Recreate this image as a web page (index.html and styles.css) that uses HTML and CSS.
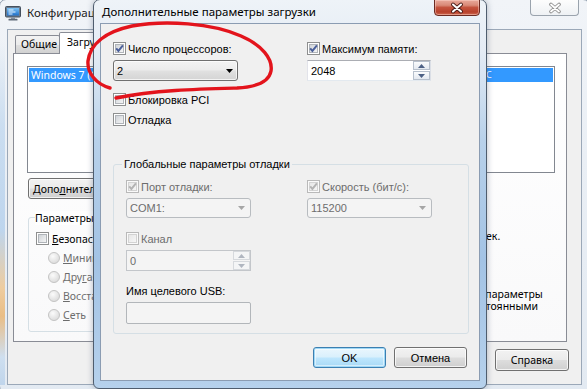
FILE: index.html
```html
<!DOCTYPE html>
<html lang="ru">
<head>
<meta charset="utf-8">
<title>Дополнительные параметры загрузки</title>
<link rel="stylesheet" href="styles.css">
</head>
<body>
<svg class="defs" width="0" height="0" aria-hidden="true">
  <defs>
    <linearGradient id="cbin" x1="0" y1="0" x2="1" y2="1">
      <stop offset="0" stop-color="#cdd1d6"/>
      <stop offset="1" stop-color="#f7f7f7"/>
    </linearGradient>
    <linearGradient id="cbdis" x1="0" y1="0" x2="1" y2="1">
      <stop offset="0" stop-color="#e6e6e6"/>
      <stop offset="1" stop-color="#f7f7f7"/>
    </linearGradient>
    <radialGradient id="rdis" cx="0.4" cy="0.35" r="0.7">
      <stop offset="0" stop-color="#fbfbfb"/>
      <stop offset="1" stop-color="#d9d9d9"/>
    </radialGradient>
    <linearGradient id="scr" x1="0" y1="0" x2="0" y2="1">
      <stop offset="0" stop-color="#7dc3f5"/>
      <stop offset="1" stop-color="#1f6fc9"/>
    </linearGradient>
  </defs>
</svg>

<div class="screen">

  <!-- background window: Конфигурация системы -->
  <div class="bgwin">
    <div class="bg-title">
      <svg class="app-ico" viewBox="0 0 16 16" width="16" height="16">
        <rect x="0.5" y="1.5" width="15" height="10.5" rx="1" fill="#6b7c90" stroke="#44505e"/>
        <rect x="2" y="3" width="12" height="7.5" fill="url(#scr)"/>
        <path d="M3.5 5h5M3.5 7h7M3.5 9h4" stroke="#e8f4ff" stroke-width="1"/>
        <rect x="6" y="12" width="4" height="2" fill="#8d98a6"/>
        <rect x="3.5" y="13.8" width="9" height="1.7" rx="0.5" fill="#5f6a78"/>
      </svg>
      <span class="bg-title-text">Конфигурация системы</span>
      <div class="close-inactive">
        <svg viewBox="0 0 14 12" width="14" height="12">
          <path d="M3 2.5 11 9.5M11 2.5 3 9.5" stroke="#8d8d8d" stroke-width="3.6" stroke-linecap="round"/>
          <path d="M3 2.5 11 9.5M11 2.5 3 9.5" stroke="#ffffff" stroke-width="1.8" stroke-linecap="round"/>
        </svg>
      </div>
    </div>
    <div class="bg-client">
      <div class="tabs">
        <div class="tab">Общие</div>
        <div class="tab sel">Загрузка</div>
      </div>
      <div class="tabpage">
        <div class="listbox">
          <div class="li sel"><span class="li-text">Windows 7 (C:\Windows)</span><span class="li-tail">С</span></div>
        </div>
        <div class="bg-btnrow">
          <div class="btn bg-btn wide">Допо<u>л</u>нительные параметры...</div>
        </div>
        <div class="bg-lower">
          <div class="gbox bg-gbox">
            <span class="gb-label bg-gb-label">Параметры загрузки</span>
            <div class="cb bg-cb"><svg class="cbx" viewBox="0 0 13 13" width="13" height="13"><rect x="0.5" y="0.5" width="12" height="12" fill="#fff" stroke="#8e8f8f"/><rect x="2.5" y="2.5" width="8" height="8" fill="url(#cbin)" stroke="#b0b4b9"/></svg><span><u>Б</u>езопасный режим</span></div>
            <div class="radios">
              <div class="rd"><svg viewBox="0 0 12 12" width="12" height="12"><circle cx="6" cy="6" r="5.5" fill="url(#rdis)" stroke="#c4c4c4"/></svg><span><u>М</u>инимальная</span></div>
              <div class="rd"><svg viewBox="0 0 12 12" width="12" height="12"><circle cx="6" cy="6" r="5.5" fill="url(#rdis)" stroke="#c4c4c4"/></svg><span>Дру<u>г</u>ая оболочка</span></div>
              <div class="rd"><svg viewBox="0 0 12 12" width="12" height="12"><circle cx="6" cy="6" r="5.5" fill="url(#rdis)" stroke="#c4c4c4"/></svg><span><u>В</u>осстановление</span></div>
              <div class="rd"><svg viewBox="0 0 12 12" width="12" height="12"><circle cx="6" cy="6" r="5.5" fill="url(#rdis)" stroke="#c4c4c4"/></svg><span><u>С</u>еть</span></div>
            </div>
          </div>
          <div class="rcol">
            <div class="rc-label"></div>
            <div class="rc-row"><span class="tbox"></span><span>сек.</span></div>
            <div class="cb bg-cb keep"><svg class="cbx" viewBox="0 0 13 13" width="13" height="13"><rect x="0.5" y="0.5" width="12" height="12" fill="#fff" stroke="#8e8f8f"/><rect x="2.5" y="2.5" width="8" height="8" fill="url(#cbin)" stroke="#b0b4b9"/></svg><span class="keep-text">Сделать эти параметры загрузки постоянными</span></div>
          </div>
        </div>
      </div>
      <div class="bg-bottom">
        <div class="btn bg-btn bb">Справка</div>
      </div>
    </div>
  </div>

  <!-- foreground dialog -->
  <div class="dlg">
    <div class="dlg-title">
      <span class="dlg-title-text">Дополнительные параметры загрузки</span>
      <div class="close-red">
        <svg viewBox="0 0 14 12" width="14" height="12">
          <path d="M3 2.5 11 9.5M11 2.5 3 9.5" stroke="#4a1c18" stroke-width="3.8" stroke-linecap="round"/>
          <path d="M3 2.5 11 9.5M11 2.5 3 9.5" stroke="#ffffff" stroke-width="2" stroke-linecap="round"/>
        </svg>
      </div>
    </div>
    <div class="dlg-client">
      <div class="row2">
        <div class="colA">
          <div class="cb"><svg class="cbx" viewBox="0 0 13 13" width="13" height="13"><rect x="0.5" y="0.5" width="12" height="12" fill="#fff" stroke="#8e8f8f"/><rect x="2.5" y="2.5" width="8" height="8" fill="url(#cbin)" stroke="#b0b4b9"/><path d="M3.2 6.3 5.4 8.9 9.9 3.3" fill="none" stroke="#4a5f9a" stroke-width="1.9"/></svg><span>Число процессоров:</span></div>
          <div class="combo"><span>2</span><svg viewBox="0 0 7 4" width="7" height="4"><path d="M0 0h7L3.5 4z" fill="#000"/></svg></div>
        </div>
        <div class="colB">
          <div class="cb"><svg class="cbx" viewBox="0 0 13 13" width="13" height="13"><rect x="0.5" y="0.5" width="12" height="12" fill="#fff" stroke="#8e8f8f"/><rect x="2.5" y="2.5" width="8" height="8" fill="url(#cbin)" stroke="#b0b4b9"/><path d="M3.2 6.3 5.4 8.9 9.9 3.3" fill="none" stroke="#4a5f9a" stroke-width="1.9"/></svg><span>Максимум памяти:</span></div>
          <div class="spin">
            <span class="spin-val">2048</span>
            <div class="spin-btns">
              <div class="sb"><svg viewBox="0 0 7 4" width="7" height="4"><path d="M0 4h7L3.5 0z" fill="#4d6185"/></svg></div>
              <div class="sb"><svg viewBox="0 0 7 4" width="7" height="4"><path d="M0 0h7L3.5 4z" fill="#4d6185"/></svg></div>
            </div>
          </div>
        </div>
      </div>
      <div class="cb pci"><svg class="cbx" viewBox="0 0 13 13" width="13" height="13"><rect x="0.5" y="0.5" width="12" height="12" fill="#fff" stroke="#8e8f8f"/><rect x="2.5" y="2.5" width="8" height="8" fill="url(#cbin)" stroke="#b0b4b9"/></svg><span>Блокировка PCI</span></div>
      <div class="cb dbg"><svg class="cbx" viewBox="0 0 13 13" width="13" height="13"><rect x="0.5" y="0.5" width="12" height="12" fill="#fff" stroke="#8e8f8f"/><rect x="2.5" y="2.5" width="8" height="8" fill="url(#cbin)" stroke="#b0b4b9"/></svg><span>Отладка</span></div>

      <div class="gbox dgroup">
        <span class="gb-label">Глобальные параметры отладки</span>
        <div class="grow">
          <div class="gcolA">
            <div class="cb dis"><svg class="cbx" viewBox="0 0 13 13" width="13" height="13"><rect x="0.5" y="0.5" width="12" height="12" fill="#fafafa" stroke="#b9b9b9"/><rect x="2.5" y="2.5" width="8" height="8" fill="url(#cbdis)" stroke="#d3d3d3"/><path d="M3.2 6.3 5.4 8.9 9.9 3.3" fill="none" stroke="#b3b3b3" stroke-width="1.9"/></svg><span>Порт отладки:</span></div>
            <div class="combo dis"><span>COM1:</span><svg viewBox="0 0 7 4" width="7" height="4"><path d="M0 0h7L3.5 4z" fill="#a6a6a6"/></svg></div>
          </div>
          <div class="gcolB">
            <div class="cb dis"><svg class="cbx" viewBox="0 0 13 13" width="13" height="13"><rect x="0.5" y="0.5" width="12" height="12" fill="#fafafa" stroke="#b9b9b9"/><rect x="2.5" y="2.5" width="8" height="8" fill="url(#cbdis)" stroke="#d3d3d3"/><path d="M3.2 6.3 5.4 8.9 9.9 3.3" fill="none" stroke="#b3b3b3" stroke-width="1.9"/></svg><span>Скорость (бит/с):</span></div>
            <div class="combo dis"><span>115200</span><svg viewBox="0 0 7 4" width="7" height="4"><path d="M0 0h7L3.5 4z" fill="#a6a6a6"/></svg></div>
          </div>
        </div>
        <div class="cb dis kanal"><svg class="cbx" viewBox="0 0 13 13" width="13" height="13"><rect x="0.5" y="0.5" width="12" height="12" fill="#fafafa" stroke="#b9b9b9"/><rect x="2.5" y="2.5" width="8" height="8" fill="url(#cbdis)" stroke="#d3d3d3"/></svg><span>Канал</span></div>
        <div class="spin dis small">
          <span class="spin-val">0</span>
          <div class="spin-btns">
            <div class="sb"><svg viewBox="0 0 7 4" width="7" height="4"><path d="M0 4h7L3.5 0z" fill="#b0b6c0"/></svg></div>
            <div class="sb"><svg viewBox="0 0 7 4" width="7" height="4"><path d="M0 0h7L3.5 4z" fill="#b0b6c0"/></svg></div>
          </div>
        </div>
        <div class="usb-label">Имя целевого USB:</div>
        <div class="tinput"></div>
      </div>

      <div class="dlg-btns">
        <div class="btn dbtn def">OK</div>
        <div class="btn dbtn">Отмена</div>
      </div>
    </div>
  </div>

  <!-- red hand-drawn annotation -->
  <svg class="annot" viewBox="0 0 587 389" width="587" height="389" aria-hidden="true">
    <path d="M110 88 C96 84 87 73 88 61 C90 45 104 32 132 26 C165 20 212 23 241 36 C262 45 273 59 271 71 C269 82 256 87 237 88 C200 89 155 90 116 98" fill="none" stroke="#e3141c" stroke-width="3.4" stroke-linecap="round" stroke-linejoin="round"/>
  </svg>
</div>
</body>
</html>
```

FILE: styles.css
```css
* { box-sizing: border-box; }
html, body { margin: 0; padding: 0; }
body { width: 587px; height: 389px; overflow: hidden; background: #ffffff; }

.defs { position: absolute; width: 0; height: 0; overflow: hidden; }

.screen {
  position: relative;
  width: 587px;
  height: 389px;
  overflow: hidden;
  background: #f3f6fa;
}

u { text-decoration: underline; text-underline-offset: 1px; }

/* ---------- shared controls ---------- */
.cb { display: flex; align-items: center; height: 13px; gap: 2px; white-space: nowrap; }
.cbx { flex: none; display: block; }

.btn {
  display: flex;
  align-items: center;
  justify-content: center;
  border: 1px solid #707070;
  border-radius: 3px;
  background: linear-gradient(#f2f2f2 0%, #ebebeb 48%, #dddddd 52%, #cfcfcf 100%);
  box-shadow: inset 0 0 0 1px rgba(255,255,255,0.75);
  color: #000;
  white-space: nowrap;
  overflow: hidden;
}

/* ---------- background window ---------- */
.bgwin {
  position: absolute;
  left: -1px;
  top: -1px;
  width: 591px;
  height: 394px;
  border: 1px solid #8c9aab;
  border-radius: 7px;
  background: linear-gradient(to bottom, #f1f4f8 0%, #eaeff5 40%, #e3eaf2 100%);
  padding: 0 7px 7px 7px;
  display: flex;
  flex-direction: column;
  font-family: "Noto Sans", "Open Sans", sans-serif;
  font-size: 10.5px;
  color: #000;
}
.bgwin::before {
  content: "";
  position: absolute;
  left: 0;
  top: 40px;
  width: 5px;
  height: 345px;
  background: linear-gradient(to bottom, rgba(190,214,238,0) 0%, #c3d9ef 25%, #b3cfec 55%, #f0c48a 72%, #eab26b 80%, #c9dcef 92%, #b7d0ea 100%);
  opacity: 0.8;
}
.bg-title {
  height: 29px;
  flex: none;
  display: flex;
  align-items: flex-start;
}
.app-ico { margin: 5px 0 0 -2px; flex: none; }
.bg-title-text {
  margin: 5px 0 0 6px;
  font-size: 11.5px;
  line-height: 16px;
  color: #222;
  flex: 1;
  white-space: nowrap;
}
.close-inactive {
  width: 49px;
  height: 16px;
  margin: 0 3px 0 0;
  border: 1px solid #9aa3ad;
  border-top: none;
  border-radius: 0 0 4px 4px;
  background: linear-gradient(#fdfdfd, #eef1f4);
  display: flex;
  align-items: center;
  justify-content: center;
}
.bg-client {
  flex: 1;
  border: 1px solid #9ba8b8;
  background: #f0f0f0;
  display: flex;
  flex-direction: column;
}
.tabs {
  height: 23px;
  margin-left: 5px;
  padding-left: 2px;
  display: flex;
  align-items: flex-end;
  position: relative;
  z-index: 2;
}
.tab {
  height: 18px;
  padding: 0 5px;
  border: 1px solid #898c95;
  border-bottom: none;
  border-radius: 2px 2px 0 0;
  background: linear-gradient(#f3f3f3 0%, #ebebeb 50%, #dedede 52%, #d2d2d2 100%);
  line-height: 16px;
  white-space: nowrap;
}
.tab:first-child { width: 45px; }
.tab + .tab { margin-left: -1px; }
.tab.sel {
  height: 22px;
  margin-bottom: -1px;
  padding: 0 7px;
  background: #ffffff;
  line-height: 19px;
}
.tabpage {
  margin-left: 5px;
  width: 554px;
  height: 289px;
  border: 1px solid #898c95;
  background: linear-gradient(#ffffff, #f9f9fa);
  padding: 12px 0 0 13px;
  display: flex;
  flex-direction: column;
  position: relative;
  z-index: 1;
}
.listbox {
  width: 528px;
  height: 107px;
  border: 1px solid #828790;
  background: #fff;
  padding: 1px;
}
.li {
  height: 14px;
  line-height: 14px;
  padding-left: 2px;
  white-space: nowrap;
  overflow: hidden;
  display: flex;
}
.li.sel { background: #3399ff; color: #fff; }
.li-text { width: 455px; flex: none; }
.li-tail { font-size: 9px; }
.bg-btnrow { display: flex; gap: 7px; margin: 5px 0 0 1px; }
.bg-btn { height: 21px; padding: 0 6px; font-size: 10.5px; }
.bg-btn.wide { width: 162px; justify-content: flex-start; padding-left: 4px; }
.bg-lower { display: flex; margin-top: 18px; }
.gbox {
  border: 1px solid #d5dfe5;
  border-radius: 3px;
  display: flex;
  flex-direction: column;
  align-items: flex-start;
}
.bg-gbox {
  width: 360px;
  height: 115px;
  margin-left: 1px;
  padding-left: 7px;
}
.gb-label {
  line-height: 14px;
  margin: -7px 0 0 -1px;
  padding: 0 2px 0 0;
  background: #fcfcfc;
  white-space: nowrap;
}
.bg-gb-label { background: #fefefe; }
.bg-cb { margin-top: 7px; gap: 3px; }
.radios { display: flex; flex-direction: column; margin: 3px 0 0 12px; }
.rd {
  height: 19px;
  display: flex;
  align-items: center;
  gap: 3px;
  color: #6d6d6d;
  white-space: nowrap;
}
.rd svg { display: block; flex: none; }
.rcol { margin-left: 15px; display: flex; flex-direction: column; align-items: flex-start; }
.rc-label { height: 14px; margin-top: -7px; }
.rc-row { display: flex; align-items: center; gap: 5px; height: 21px; margin-top: 1px; }
.tbox {
  width: 73px;
  height: 21px;
  border: 1px solid #abadb3;
  background: #fff;
}
.keep { margin-top: 42px; align-items: flex-start; height: auto; gap: 4px; }
.keep-text { white-space: normal; width: 135px; line-height: 12px; word-spacing: 1px; }
.bg-bottom {
  display: flex;
  justify-content: flex-end;
  margin-top: 7px;
  padding-right: 12px;
}
.bg-btn.bb { width: 74px; height: 22px; }

/* ---------- foreground dialog ---------- */
.dlg {
  position: absolute;
  left: 93px;
  top: -1px;
  width: 394px;
  height: 390px;
  border: 1px solid #4f5d6e;
  border-radius: 7px 7px 6px 6px;
  background: linear-gradient(to bottom, #eef3f8 0px, #e5ecf5 50px, #b8d1ea 140px, #a3c3e5 260px, #b6d1ec 390px);
  padding: 0 6px 7px 6px;
  display: flex;
  flex-direction: column;
  box-shadow: 0 0 6px rgba(40, 60, 90, 0.35);
  z-index: 5;
}
.dlg-title {
  height: 23px;
  flex: none;
  display: flex;
  align-items: flex-start;
  justify-content: space-between;
}
.dlg-title-text {
  margin: 4px 0 0 2px;
  font-family: "Noto Sans", "Open Sans", sans-serif;
  font-size: 11.5px;
  line-height: 16px;
  color: #000;
  white-space: nowrap;
}
.close-red {
  width: 46px;
  height: 17px;
  margin-top: -1px;
  border: 1px solid #6b2a22;
  border-radius: 0 0 4px 4px;
  background: linear-gradient(#e9a99b 0%, #d98a78 35%, #c4533e 50%, #b8412c 80%, #cf6a52 100%);
  box-shadow: inset 0 0 0 1px rgba(255, 220, 210, 0.45);
  display: flex;
  align-items: center;
  justify-content: center;
}
.dlg-client {
  flex: 1;
  border: 1px solid #8b9cb2;
  background: #f0f0f0;
  padding: 18px 0 0 12px;
  display: flex;
  flex-direction: column;
  align-items: flex-start;
  font-family: "Liberation Sans", Arial, sans-serif;
  font-size: 11px;
  color: #000;
}
.row2 { display: flex; }
.colA { width: 194px; display: flex; flex-direction: column; }
.colB { display: flex; flex-direction: column; }
.combo {
  width: 125px;
  height: 21px;
  margin-top: 5px;
  border: 1px solid #707070;
  border-radius: 3px;
  background: linear-gradient(#f3f3f3 0%, #ececec 45%, #e0e0e0 55%, #d4d4d4 100%);
  box-shadow: inset 0 0 0 1px rgba(255,255,255,0.7);
  display: flex;
  align-items: center;
  justify-content: space-between;
  padding: 0 4px 0 3px;
}
.combo svg { display: block; }
.combo.dis {
  border-color: #b8bcc0;
  background: #f4f4f4;
  box-shadow: none;
  color: #6d6d6d;
  padding: 0 5px 0 3px;
}
.spin {
  width: 124px;
  height: 21px;
  margin-top: 5px;
  border: 1px solid #abadb3;
  border-color: #abadb3 #dbdfe6 #e3e9ef #e2e3ea;
  background: #fff;
  display: flex;
  align-items: center;
  justify-content: space-between;
  padding: 0 0 0 3px;
}
.spin-btns { display: flex; flex-direction: column; gap: 1px; }
.sb {
  width: 17px;
  height: 9px;
  border: 1px solid #b7c0cc;
  background: linear-gradient(#fbfcfd, #e4e9f0);
  display: flex;
  align-items: center;
  justify-content: center;
}
.sb svg { display: block; }
.spin.dis { background: #f4f4f4; border-color: #c3c6ca; color: #6d6d6d; }
.spin.dis .sb { border-color: #d6d9dd; background: #f4f5f6; }
.pci { margin-top: 12px; }
.dbg { margin-top: 7px; }
.dgroup {
  width: 356px;
  height: 170px;
  margin-top: 38px;
  padding-left: 12px;
}
.dgroup .gb-label { margin: -7px 0 0 -4px; padding: 0 2px; background: #f0f0f0; line-height: 13px; }
.grow { display: flex; margin-top: 9px; }
.gcolA { width: 181px; display: flex; flex-direction: column; }
.gcolB { display: flex; flex-direction: column; }
.cb.dis { color: #6d6d6d; }
.dgroup .combo { width: 125px; height: 20px; margin-top: 5px; }
.kanal { margin-top: 14px; }
.spin.small { width: 125px; margin-top: 5px; }
.usb-label { margin-top: 14px; line-height: 13px; }
.tinput {
  width: 125px;
  height: 22px;
  margin-top: 4px;
  border: 1px solid #b2b6ba;
  border-radius: 2px;
  background: #f4f4f4;
}
.dlg-btns {
  align-self: stretch;
  display: flex;
  justify-content: flex-end;
  gap: 8px;
  margin-top: 13px;
  padding-right: 12px;
}
.dbtn { width: 73px; height: 21px; font-size: 11px; }
.dbtn.def {
  border-color: #3c7fb1;
  box-shadow: inset 0 0 0 1px #9fd8f6, inset 0 0 0 2px rgba(255,255,255,0.5);
  background: linear-gradient(#eaf6fd 0%, #d9f0fc 48%, #bee6fd 52%, #a7d9f5 100%);
}

/* ---------- annotation ---------- */
.annot {
  position: absolute;
  left: 0;
  top: 0;
  z-index: 10;
  pointer-events: none;
}
```
